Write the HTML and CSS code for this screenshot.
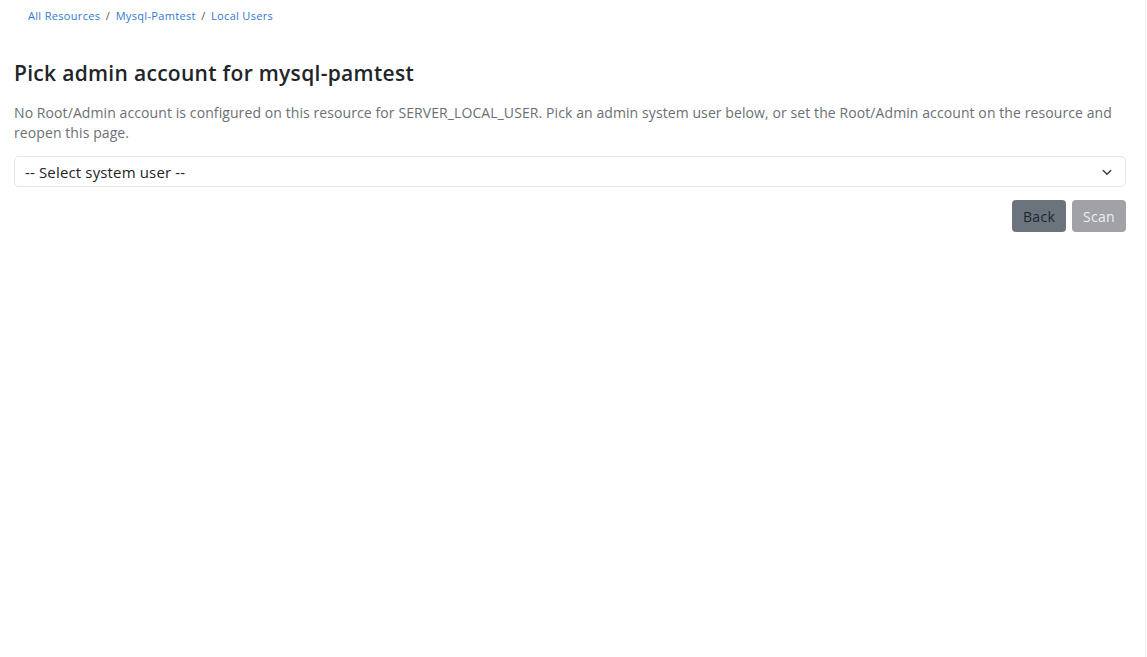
FILE: index.html
```html
<!DOCTYPE html>
<html lang="en">
<head>
<meta charset="utf-8">
<title>Pick admin account</title>
<link rel="stylesheet" href="styles.css">
</head>
<body>
<div class="page">
  <nav class="crumbs">
    <a href="#">All Resources</a><span class="sep">/</span><a href="#">Mysql-Pamtest</a><span class="sep">/</span><a href="#">Local Users</a>
  </nav>
  <main class="content">
    <h1 class="title">Pick admin account for mysql-pamtest</h1>
    <p class="desc">No Root/Admin account is configured on this resource for SERVER_LOCAL_USER. Pick an admin system user below, or set the Root/Admin account on the resource and reopen this page.</p>
    <div class="select">
      <span class="select-text">-- Select system user --</span>
      <svg class="chev" width="12" height="12" viewBox="0 0 16 16"><path d="M3 6l5 5 5-5" fill="none" stroke="#343a40" stroke-width="1.8" stroke-linecap="round" stroke-linejoin="round"/></svg>
    </div>
    <div class="actions">
      <button class="btn btn-back">Back</button>
      <button class="btn btn-scan">Scan</button>
    </div>
  </main>
</div>
</body>
</html>
```
FILE: styles.css
```css
html, body {
  margin: 0;
  padding: 0;
  background: #fff;
}
body {
  font-family: "Open Sans", "Liberation Sans", sans-serif;
  color: #212529;
}
.page {
  width: 1146px;
  height: 657px;
  box-sizing: border-box;
  border-right: 1px solid #f0f0f2;
}
.crumbs {
  padding: 7px 0 0 28px;
  height: 18px;
  font-size: 11px;
  line-height: 17px;
  letter-spacing: 0.32px;
}
.crumbs a {
  color: #2f7ad0;
  text-decoration: none;
}
.crumbs .sep {
  color: #555;
  margin: 0 5.5px;
}
.content {
  padding: 0 19px 0 14px;
}
.title {
  margin: 33px 0 0;
  font-size: 21px;
  line-height: 30px;
  font-weight: 600;
  letter-spacing: 0.3px;
  color: #212529;
}
.desc {
  margin: 15px 0 0;
  font-size: 14px;
  line-height: 19.5px;
  letter-spacing: 0.09px;
  color: #6c6f73;
}
.select {
  margin-top: 14px;
  height: 31px;
  box-sizing: border-box;
  border: 1px solid #e3e5e8;
  border-radius: 5px;
  display: flex;
  align-items: center;
  justify-content: space-between;
  padding: 0 12px 0 10px;
  font-size: 15px;
  letter-spacing: 0.15px;
  color: #212529;
}
.chev {
  display: block;
}
.actions {
  margin-top: 13px;
  display: flex;
  justify-content: flex-end;
  gap: 6px;
}
.btn {
  height: 32px;
  border: none;
  border-radius: 4px;
  font-family: inherit;
  font-size: 14px;
  letter-spacing: 0.3px;
  padding: 0 11px;
}
.btn-back {
  background: #6b747c;
  color: #1c2630;
}
.btn-scan {
  background: #a0a2a7;
  color: #eceef0;
}
```
